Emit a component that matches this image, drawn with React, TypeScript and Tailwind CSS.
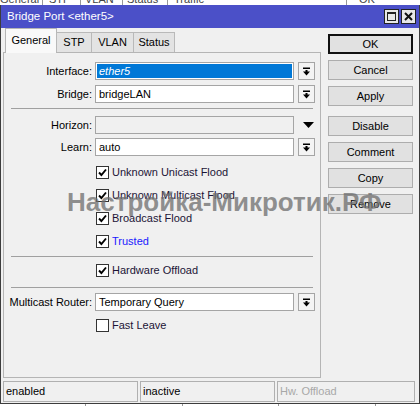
import type { ReactNode } from "react";

const FONT = "font-['Liberation_Sans',Arial,sans-serif]";

function DropArrow() {
  return (
    <svg width="9" height="9" viewBox="0 0 9 9" aria-hidden="true">
      <rect x="1" y="0.5" width="7" height="1.5" fill="#000" />
      <rect x="3.5" y="3" width="2" height="2" fill="#000" />
      <polygon points="1,4.5 8,4.5 4.5,8.5" fill="#000" />
    </svg>
  );
}

function Check({ on }: { on: boolean }) {
  return (
    <span className="flex h-[13px] w-[13px] flex-none items-center justify-center border border-[#333] bg-white">
      {on && (
        <svg width="9" height="9" viewBox="0 0 9 9" aria-hidden="true">
          <path d="M1 4.5 L3.4 7 L8 1.5" fill="none" stroke="#000" strokeWidth="1.9" />
        </svg>
      )}
    </span>
  );
}

function Field({
  label,
  value,
  mode = "normal",
  className = "",
}: {
  label: string;
  value?: string;
  mode?: "normal" | "selected" | "disabled";
  className?: string;
}) {
  return (
    <div className={`flex h-[18px] items-center gap-[3px] ${className}`}>
      <span className="w-[88px] text-right">{label}</span>
      {mode === "selected" ? (
        <div className="h-full w-[199px] border border-[#a5a5a5] bg-white p-px">
          <div className="flex h-full items-center bg-[#0078d7] pl-[2px] italic text-white">{value}</div>
        </div>
      ) : (
        <div
          className={`flex h-full w-[199px] items-center border border-[#a5a5a5] pl-[3px] ${
            mode === "disabled" ? "bg-[#f0f0f0]" : "bg-white"
          }`}
        >
          {value}
        </div>
      )}
      {mode === "disabled" ? (
        <span className="ml-[4px] flex w-[14px] justify-center">
          <svg width="11" height="6" viewBox="0 0 11 6" aria-hidden="true">
            <polygon points="0,0 11,0 5.5,6" fill="#000" />
          </svg>
        </span>
      ) : (
        <span className="ml-px flex h-full w-[17px] items-center justify-center border border-[#a5a5a5] bg-[#f4f4f4]">
          <DropArrow />
        </span>
      )}
    </div>
  );
}

function CheckRow({ label, on, blue, className = "" }: { label: string; on: boolean; blue?: boolean; className?: string }) {
  return (
    <div className={`flex h-[18px] items-center gap-[3px] pl-[92px] ${className}`}>
      <Check on={on} />
      <span className={blue ? "text-[#1a1aff]" : "text-[#1c1436]"}>{label}</span>
    </div>
  );
}

function Rule({ className = "" }: { className?: string }) {
  return <div className={`ml-[7px] w-[302px] border-t border-[#a0a0a0] ${className}`} />;
}

function Btn({ children, primary, className = "" }: { children: ReactNode; primary?: boolean; className?: string }) {
  return (
    <div
      className={`flex h-[20px] w-[85px] items-center justify-center bg-[#e1e1e1] ${
        primary ? "border-2 border-[#111]" : "border border-[#adadad]"
      } ${className}`}
    >
      {children}
    </div>
  );
}

export default function App() {
  const tabs = [
    { name: "STP", w: "w-[36px]" },
    { name: "VLAN", w: "w-[43px]" },
    { name: "Status", w: "w-[42px]" },
  ];

  return (
    <div className={`relative flex h-[406px] w-[420px] flex-col overflow-hidden bg-white text-[11px] text-black ${FONT}`}>
      {/* window behind, only its header row peeks out */}
      <div className="relative h-[5px] overflow-hidden text-[#444]">
        <div className="absolute -top-[9px] left-0 flex">
          <span className="w-[43px] border-r border-[#999]">General</span>
          <span className="w-[38px] border-r border-[#999] pl-[6px]">STP</span>
          <span className="w-[42px] border-r border-[#999] pl-[4px]">VLAN</span>
          <span className="w-[45px] border-r border-[#999] pl-[4px]">Status</span>
          <span className="w-[179px] border-r border-[#999] pl-[6px]">Traffic</span>
          <span className="pl-[12px]">OK</span>
        </div>
      </div>

      <div className="flex h-[399px] flex-col border-x border-b border-[#3c3c3c] bg-[#f0f0f0]">
        {/* title bar */}
        <div className="flex h-[23px] items-center bg-[#4b50c8] pl-[6px] pr-[3px] text-white">
          <span className="flex-1 text-[11.5px]">Bridge Port &lt;ether5&gt;</span>
          <span className="flex h-[15px] w-[15px] items-center justify-center border border-[#222] bg-[#e8e8e8]">
            <span className="h-[9px] w-[9px] border border-t-2 border-[#222]" />
          </span>
          <span className="ml-[2px] flex h-[15px] w-[15px] items-center justify-center border border-[#222] bg-[#e8e8e8]">
            <svg width="9" height="9" viewBox="0 0 9 9" aria-hidden="true">
              <path d="M1 1 L8 8 M8 1 L1 8" stroke="#111" strokeWidth="2" />
            </svg>
          </span>
        </div>

        <div className="flex flex-1 flex-col px-[2px]">
          <div className="flex">
            <div className="flex w-[318px] flex-col">
              {/* tabs */}
              <div className="relative z-10 flex h-[24px] items-end pl-[2px]">
                <div className="-mb-px flex h-[25px] w-[52px] items-center justify-center border border-b-0 border-[#b5b5b5] bg-[#f9f9f9] pb-[2px]">
                  General
                </div>
                {tabs.map((t) => (
                  <div
                    key={t.name}
                    className={`-ml-px flex h-[20px] ${t.w} items-center justify-center border border-b-0 border-[#b9b9b9] bg-[#e3e3e3] first:ml-0`}
                  >
                    {t.name}
                  </div>
                ))}
              </div>

              {/* tab panel */}
              <div className="flex h-[326px] flex-col border border-[#b5b5b5] bg-[#f0f0f0] pt-[9px]">
                <Field label="Interface:" value="ether5" mode="selected" />
                <Field label="Bridge:" value="bridgeLAN" className="mt-[5px]" />
                <Rule className="mt-[5px]" />
                <Field label="Horizon:" mode="disabled" className="mt-[7px]" />
                <Field label="Learn:" value="auto" className="mt-[4px]" />
                <CheckRow label="Unknown Unicast Flood" on className="mt-[7px]" />
                <CheckRow label="Unknown Multicast Flood" on className="mt-[5px]" />
                <CheckRow label="Broadcast Flood" on className="mt-[5px]" />
                <CheckRow label="Trusted" on blue className="mt-[5px]" />
                <Rule className="mt-[6px]" />
                <CheckRow label="Hardware Offload" on className="mt-[4px]" />
                <Rule className="mt-[8px]" />
                <Field label="Multicast Router:" value="Temporary Query" className="mt-[5px]" />
                <CheckRow label="Fast Leave" on={false} className="mt-[5px]" />
              </div>
            </div>

            {/* command buttons */}
            <div className="ml-[7px] flex flex-col pt-[6px]">
              <Btn primary>OK</Btn>
              <Btn className="mt-[6px]">Cancel</Btn>
              <Btn className="mt-[6px]">Apply</Btn>
              <Btn className="mt-[10px]">Disable</Btn>
              <Btn className="mt-[6px]">Comment</Btn>
              <Btn className="mt-[6px]">Copy</Btn>
              <Btn className="mt-[6px]">Remove</Btn>
            </div>
          </div>

          {/* status bar */}
          <div className="mt-[3px] flex h-[21px] gap-[2px]">
            <div className="flex w-[135px] items-center border border-[#b0b0b0] pl-[2px]">enabled</div>
            <div className="flex w-[135px] items-center border border-[#b0b0b0] pl-[2px]">inactive</div>
            <div className="flex w-[138px] items-center border border-[#b0b0b0] pl-[2px] text-[#a8a8a8]">Hw. Offload</div>
          </div>
        </div>
      </div>

      {/* rows of the window behind */}
      <div className="flex h-[2px]">
        <span className="w-[86px] border-r border-[#999]" />
        <span className="w-[97px] border-r border-[#999]" />
        <span className="w-[96px] border-r border-[#999]" />
        <span className="w-[97px] border-r border-[#999]" />
      </div>

      {/* site watermark */}
      <div className="pointer-events-none absolute left-[67px] top-[189px] text-[26px] font-bold leading-none text-[#6e6e6e]/75">
        Настройка-Микротик.РФ
      </div>
    </div>
  );
}
